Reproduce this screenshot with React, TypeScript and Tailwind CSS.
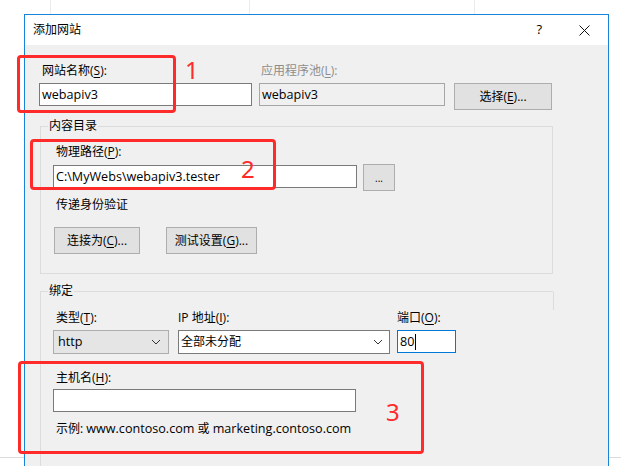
import React from "react";

const font = { fontFamily: '"Open Sans", "Noto Sans CJK SC", sans-serif' };

function U({ c }: { c: string }) {
  return <span className="underline underline-offset-[2px]">{c}</span>;
}

function L({ children }: { children: React.ReactNode }) {
  return <span className="text-[12.6px]">{children}</span>;
}

function Chevron() {
  return (
    <svg width="10" height="6" viewBox="0 0 10 6" className="shrink-0">
      <path d="M1 1 L5 5 L9 1" fill="none" stroke="#333" strokeWidth="1" />
    </svg>
  );
}

function RedBox({ className }: { className: string }) {
  return <div className={`absolute rounded-[4px] border-[3px] border-[#ff2b2b] ${className}`} />;
}

function RedNum({ n, className }: { n: string; className: string }) {
  return (
    <div className={`absolute text-[24px] leading-none text-[#ff2b2b] ${className}`} style={{ fontFamily: '"Noto Sans", sans-serif' }}>
      {n}
    </div>
  );
}

export default function App() {
  return (
    <div className="relative h-[466px] w-[621px] overflow-hidden bg-white text-[12px] text-black" style={font}>
      {/* desktop background faint lines */}
      <div className="absolute left-[50px] top-0 h-[14px] w-px bg-[#ececec]" />
      <div className="absolute left-[249px] top-0 h-[14px] w-px bg-[#ececec]" />
      <div className="absolute left-[474px] top-0 h-[14px] w-px bg-[#ececec]" />
      <div className="absolute left-0 top-[457px] h-px w-[24px] bg-[#dcdcdc]" />
      <div className="absolute left-[609px] top-[457px] h-px w-[12px] bg-[#dcdcdc]" />

      {/* dialog window */}
      <div className="absolute left-[24px] top-[14px] flex h-[470px] w-[585px] flex-col border border-[#1883d7] bg-[#f0f0f0]">
        {/* title bar */}
        <div className="flex h-[30px] shrink-0 items-center bg-white pl-[8px]">
          <span className="leading-4">添加网站</span>
          <span className="ml-auto mr-[37px] text-[13px]">?</span>
          <svg width="11" height="11" viewBox="0 0 11 11" className="mr-[18px]">
            <path d="M0.5 0.5 L10.5 10.5 M10.5 0.5 L0.5 10.5" stroke="#111" strokeWidth="1" />
          </svg>
        </div>

        {/* body */}
        <div className="flex flex-col pl-[14px] pt-[18px]">
          {/* row 1 */}
          <div className="flex items-start">
            <div className="flex w-[213px] flex-col">
              <span className="pl-[3px] leading-4">
                网站名称(<U c="S" />):
              </span>
              <div className="mt-1 flex h-[23px] items-center border border-[#7a7a7a] bg-white pl-[2px] leading-4">
                <L>webapiv3</L>
              </div>
            </div>
            <div className="ml-[7px] flex w-[186px] flex-col">
              <span className="pl-[2px] leading-4 text-[#8d8d8d]">
                应用程序池(<U c="L" />):
              </span>
              <div className="mt-1 flex h-[23px] items-center border border-[#a6a6a6] bg-[#f0f0f0] pl-[2px] leading-4">
                <L>webapiv3</L>
              </div>
            </div>
            <button className="ml-[9px] mt-[20px] flex h-[27px] w-[98px] items-center justify-center border border-[#adadad] bg-[#e1e1e1] leading-4">
              选择(<U c="E" />)...
            </button>
          </div>

          {/* group 内容目录 */}
          <div className="relative ml-px mt-[16px] w-[513px] border border-[#dcdcdc] pl-[12px] pt-[16px] pb-[19px]">
            <span className="absolute left-[7px] top-[-9px] bg-[#f0f0f0] px-px leading-4">内容目录</span>
            <span className="pl-[3px] leading-4">
              物理路径(<U c="P" />):
            </span>
            <div className="flex items-start">
              <div className="mt-[4px] flex h-[23px] w-[304px] items-center border border-[#7a7a7a] bg-white pl-[2px] leading-4">
                <L>C:\MyWebs\webapiv3.tester</L>
              </div>
              <button className="ml-[6px] mt-[3px] flex h-[27px] w-[32px] items-center justify-center border border-[#adadad] bg-[#e1e1e1] text-[10px] leading-4">
                ...
              </button>
            </div>
            <div className="mt-[6px] pl-[3px] leading-4">传递身份验证</div>
            <div className="mt-[14px] flex pl-px">
              <button className="flex h-[27px] w-[86px] items-center justify-center border border-[#adadad] bg-[#e1e1e1] leading-4">
                连接为(<U c="C" />)...
              </button>
              <button className="ml-[26px] flex h-[27px] w-[91px] items-center justify-center border border-[#adadad] bg-[#e1e1e1] leading-4">
                测试设置(<U c="G" />)...
              </button>
            </div>
          </div>

          {/* group 绑定 */}
          <div className="relative ml-px mt-[17px] w-[513px] border-l border-t border-[#dcdcdc] pl-[12px] pt-[18px]">
            <span className="absolute left-[7px] top-[-9px] bg-[#f0f0f0] px-px leading-4">绑定</span>
            <div className="absolute right-[-1px] top-0 h-[18px] w-px bg-[#dcdcdc]" />
            <div className="flex items-start">
              <div className="flex w-[116px] flex-col">
                <span className="pl-[3px] leading-4">
                  类型(<U c="T" />):
                </span>
                <div className="mt-1 flex h-[24px] items-center border border-[#adadad] bg-[#e5e5e5] pl-[4px] pr-[7px] leading-4">
                  <L>http</L>
                  <span className="ml-auto">
                    <Chevron />
                  </span>
                </div>
              </div>
              <div className="ml-[9px] flex w-[212px] flex-col">
                <span className="leading-4">
                  IP 地址(<U c="I" />):
                </span>
                <div className="mt-1 flex h-[24px] items-center border border-[#7a7a7a] bg-white pl-[2px] pr-[6px] leading-4">
                  <span>全部未分配</span>
                  <span className="ml-auto">
                    <Chevron />
                  </span>
                </div>
              </div>
              <div className="ml-[7px] flex w-[59px] flex-col">
                <span className="leading-4">
                  端口(<U c="O" />):
                </span>
                <div className="mt-1 flex h-[23px] items-center border border-[#0078d7] bg-white pl-[2px] leading-4">
                  <L>80</L>
                  <span className="ml-px h-[16px] w-px bg-black" />
                </div>
              </div>
            </div>

            <div className="mt-[16px] pl-[3px] leading-4">
              主机名(<U c="H" />):
            </div>
            <div className="mt-[3px] h-[23px] w-[303px] border border-[#7a7a7a] bg-white" />
            <div className="mt-[9px] pl-[3px] leading-4">
              示例: <L>www.contoso.com</L> 或 <L>marketing.contoso.com</L>
            </div>
            <div className="h-[60px]" />
          </div>
        </div>
      </div>

      {/* annotations */}
      <RedBox className="left-[17px] top-[55px] h-[58px] w-[159px]" />
      <RedNum n="1" className="left-[185px] top-[58px]" />
      <RedBox className="left-[30px] top-[139px] h-[51px] w-[246px]" />
      <RedNum n="2" className="left-[241px] top-[157px]" />
      <RedBox className="left-[18px] top-[361px] h-[93px] w-[406px]" />
      <RedNum n="3" className="left-[386px] top-[400px]" />
    </div>
  );
}
